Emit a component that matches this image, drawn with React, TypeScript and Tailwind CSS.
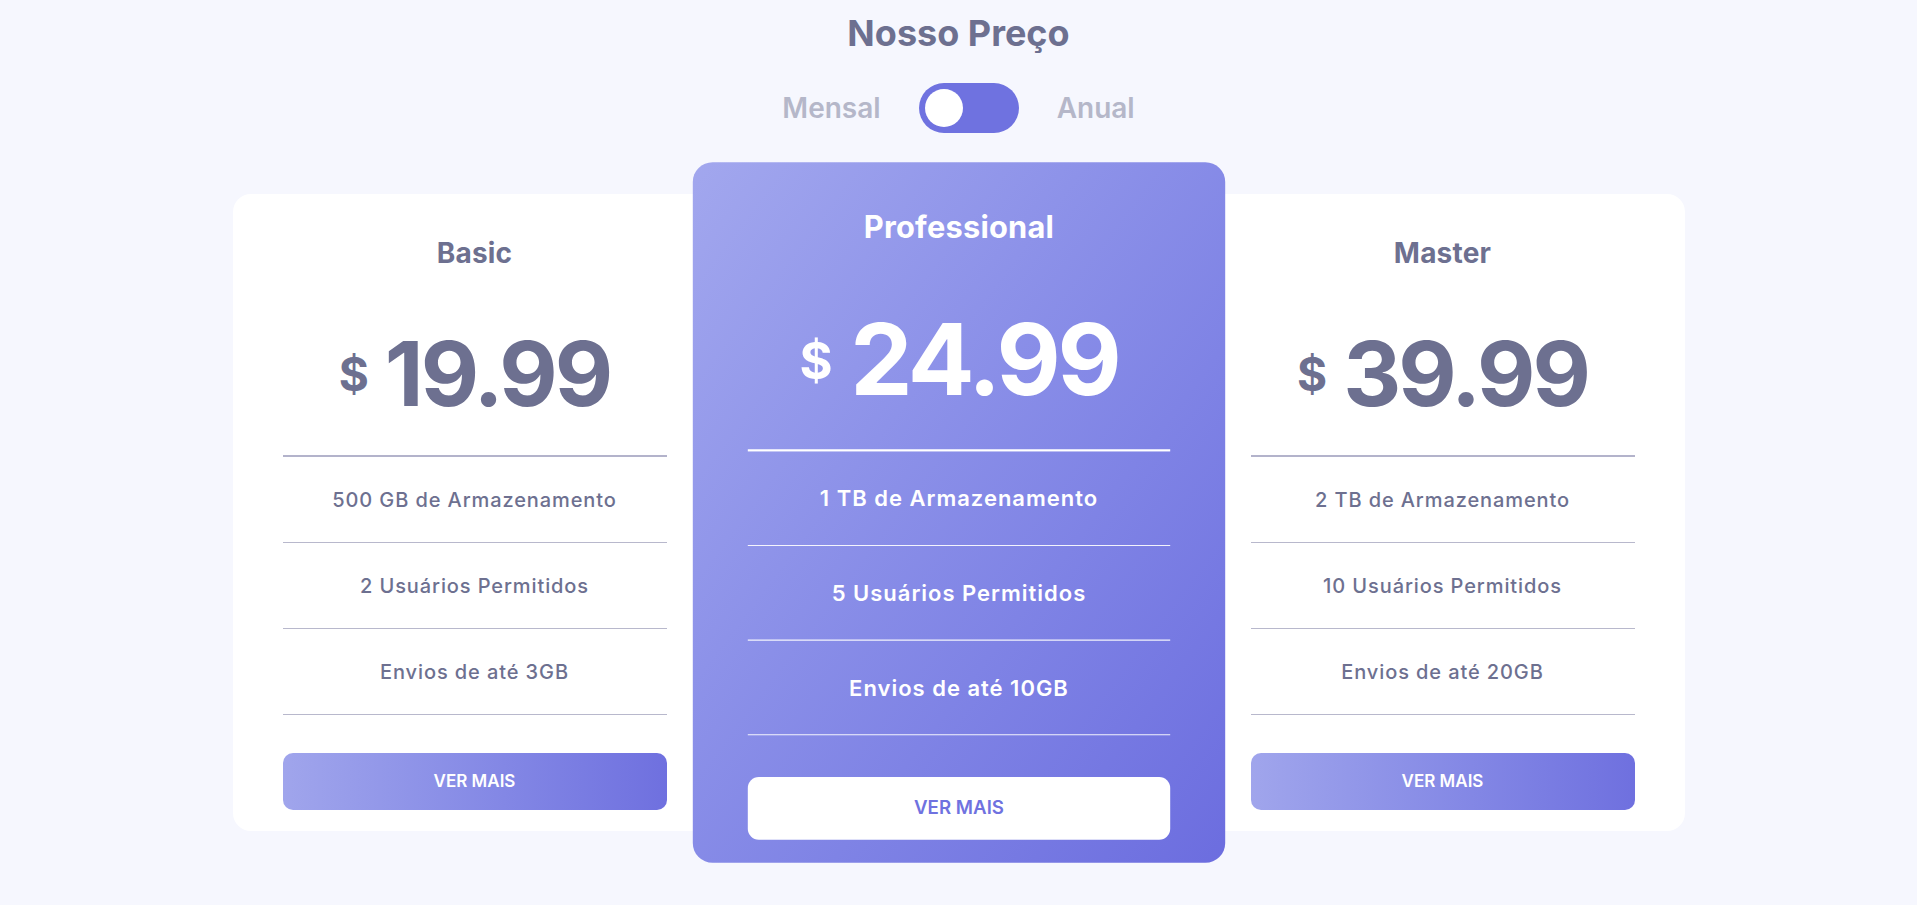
import { useState } from "react";

type Plan = {
  name: string;
  price: string;
  features: string[];
  featured?: boolean;
};

const PLANS: Plan[] = [
  {
    name: "Basic",
    price: "19.99",
    features: ["500 GB de Armazenamento", "2 Usuários Permitidos", "Envios de até 3GB"],
  },
  {
    name: "Professional",
    price: "24.99",
    features: ["1 TB de Armazenamento", "5 Usuários Permitidos", "Envios de até 10GB"],
    featured: true,
  },
  {
    name: "Master",
    price: "39.99",
    features: ["2 TB de Armazenamento", "10 Usuários Permitidos", "Envios de até 20GB"],
  },
];

function PriceCard({ plan }: { plan: Plan }) {
  const featured = !!plan.featured;

  return (
    <div
      className={`flex flex-col w-[484px] h-[637px] px-[50px] pt-[42px] pb-[21px] rounded-[18px] ${
        featured
          ? "relative z-10 scale-110 bg-linear-to-br from-[#a2a7ee] to-[#6c6ddf] text-white"
          : "bg-white text-[#6d7090]"
      }`}
    >
      <h3 className="text-center text-[28px] leading-[34px] font-bold tracking-[0.2px]">
        {plan.name}
      </h3>

      {/* preço */}
      <div className="mt-[59px] flex items-center justify-center gap-[16px] h-[90px]">
        <span className="text-[46px] leading-none font-bold">$</span>
        <span className="text-[90px] leading-none font-bold tracking-[-3px]">
          {plan.price}
        </span>
      </div>

      <ul
        className={`mt-[36px] border-t-2 ${
          featured ? "border-white" : "border-[#b3b3cb]"
        }`}
      >
        {plan.features.map((f) => (
          <li
            key={f}
            className={`h-[86px] flex items-center justify-center border-b text-[20px] tracking-[0.9px] ${
              featured
                ? "border-white/90 font-semibold"
                : "border-[#b8b8cc] font-medium"
            }`}
          >
            {f}
          </li>
        ))}
      </ul>

      <button
        type="button"
        className={`mt-auto h-[57px] w-full rounded-[10px] text-[17px] font-semibold ${
          featured
            ? "bg-white text-[#6f72e0]"
            : "bg-linear-to-r from-[#a0a5ec] to-[#6f70df] text-white"
        }`}
      >
        VER MAIS
      </button>
    </div>
  );
}

export default function App() {
  const [annual, setAnnual] = useState(false);

  return (
    <div
      className="min-h-screen bg-[#f6f7fe] flex flex-col items-center pt-[11px]"
      style={{ fontFamily: "Inter, 'Noto Sans', sans-serif" }}
    >
      <h2 className="text-[36px] leading-[44px] font-bold text-[#6d7090]">
        Nosso Preço
      </h2>

      {/* alternar mensal / anual */}
      <div className="mt-[28px] flex items-center gap-[38px]">
        <span className="text-[28px] font-semibold text-[#b5b7c9]">Mensal</span>
        <button
          type="button"
          aria-label="alternar plano"
          onClick={() => setAnnual(!annual)}
          className={`flex w-[100px] h-[50px] rounded-full bg-[#6f72e0] p-[6px] ${
            annual ? "justify-end" : "justify-start"
          }`}
        >
          <span className="block size-[38px] rounded-full bg-white" />
        </button>
        <span className="text-[28px] font-semibold text-[#b5b7c9]">Anual</span>
      </div>

      <div className="mt-[61px] flex">
        {PLANS.map((p) => (
          <PriceCard key={p.name} plan={p} />
        ))}
      </div>
    </div>
  );
}
